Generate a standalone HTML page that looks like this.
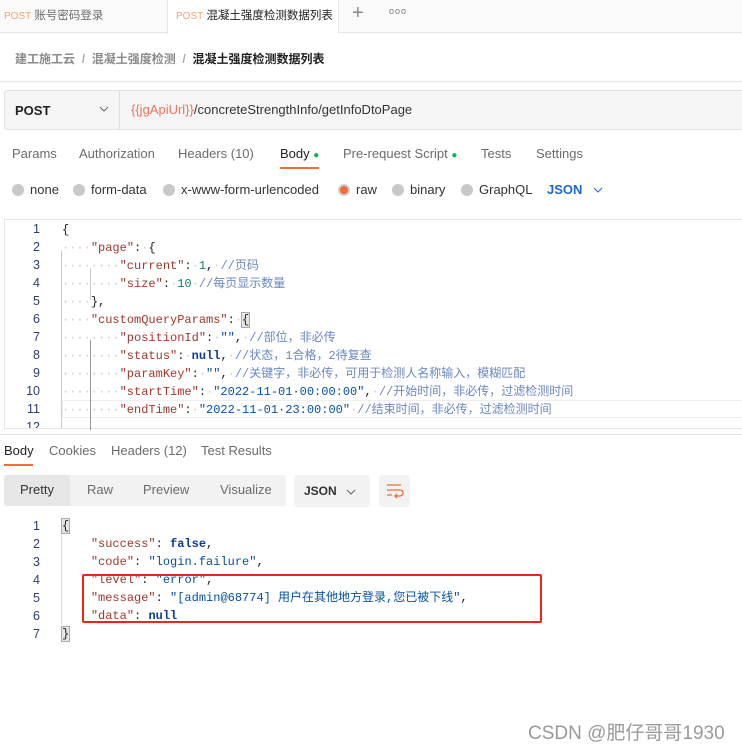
<!DOCTYPE html>
<html><head><meta charset="utf-8"><style>
*{margin:0;padding:0;box-sizing:border-box}
body{width:742px;height:749px;background:#fff;font-family:"Liberation Sans","Noto Sans CJK SC",sans-serif;color:#212121;position:relative;overflow:hidden;font-size:13px}
.a{position:absolute;white-space:nowrap}
.g{color:#6b6b6b}
.mono{font-family:"Liberation Mono","Noto Sans CJK SC",monospace;font-size:12px}
.k{color:#a3362b}.s{color:#0451a5}.n{color:#098658}.b{color:#0d3a9e;font-weight:bold}.c{color:#6a88c0}.d{color:#ccc}
.ln{position:absolute;width:40px;text-align:right;font-size:12.5px;color:#2c3e6e;font-family:"Liberation Sans",sans-serif}
.radio{display:inline-block;width:12px;height:12px;border-radius:50%;background:#c8c8c8;vertical-align:-2px;margin-right:6px}
</style></head><body>
<div class="a" style="left:0;top:0;width:742px;height:33px;background:#fafafa;border-bottom:1px solid #e6e6e6"></div>
<div class="a" style="left:167px;top:0;width:172px;height:34px;background:#fff;border-left:1px solid #e6e6e6;border-right:1px solid #e6e6e6"></div>
<div class="a" style="left:4px;top:7px;font-size:11.5px"><span style="color:#f5a26e;font-size:10px">POST</span> <span class="g">账号密码登录</span></div>
<div class="a" style="left:176px;top:7px;font-size:11.5px"><span style="color:#f5a26e;font-size:10px">POST</span> <span>混凝土强度检测数据列表</span></div>
<div class="a" style="left:352px;top:2px;font-size:20px;color:#888">+</div>
<div class="a" style="left:389px;top:6px;font-size:9px;color:#777;letter-spacing:1px">ooo</div>
<div class="a" style="left:15px;top:50px;font-size:12px;font-weight:bold"><span style="color:#8a8a8a">建工施工云</span> <span style="color:#aaa">&nbsp;/&nbsp;</span> <span style="color:#8a8a8a">混凝土强度检测</span> <span style="color:#aaa">&nbsp;/&nbsp;</span> <span>混凝土强度检测数据列表</span></div>
<div class="a" style="left:0;top:81px;width:742px;height:1px;background:#e6e6e6"></div>
<div class="a" style="left:4px;top:90px;width:760px;height:40px;background:#f5f5f5;border:1px solid #e3e3e3;border-radius:3px"></div>
<div class="a" style="left:119px;top:91px;width:1px;height:38px;background:#e0e0e0"></div>
<div class="a" style="left:15px;top:103px;font-weight:bold;font-size:13px">POST</div>
<svg class="a" style="left:99px;top:106px" width="10" height="6"><path d="M1 1l4 4 4-4" fill="none" stroke="#666"/></svg>
<div class="a" style="left:131px;top:102px;font-size:13px"><span style="color:#f0735a">{{jgApiUrl}}</span><span style="color:#333">/concreteStrengthInfo/getInfoDtoPage</span></div>
<div class="a g" style="left:12px;top:146px">Params</div>
<div class="a g" style="left:79px;top:146px">Authorization</div>
<div class="a g" style="left:178px;top:146px">Headers <span>(10)</span></div>
<div class="a" style="left:280px;top:146px">Body <span style="color:#0cb552;font-size:10px">●</span></div>
<div class="a" style="left:280px;top:167px;width:39px;height:2px;background:#f26b3a"></div>
<div class="a g" style="left:343px;top:146px">Pre-request Script <span style="color:#0cb552;font-size:10px">●</span></div>
<div class="a g" style="left:481px;top:146px">Tests</div>
<div class="a g" style="left:536px;top:146px">Settings</div>
<div class="a" style="left:12px;top:182px;color:#333"><span class="radio"></span>none</div>
<div class="a" style="left:73px;top:182px;color:#333"><span class="radio"></span>form-data</div>
<div class="a" style="left:163px;top:182px;color:#333"><span class="radio"></span>x-www-form-urlencoded</div>
<div class="a" style="left:338px;top:182px;color:#333"><span class="radio" style="background:#f26b3a;border:2px solid #ccc"></span>raw</div>
<div class="a" style="left:392px;top:182px;color:#333"><span class="radio"></span>binary</div>
<div class="a" style="left:461px;top:182px;color:#333"><span class="radio"></span>GraphQL</div>
<div class="a" style="left:547px;top:182px;color:#1f66d1;font-weight:bold">JSON</div>
<svg class="a" style="left:593px;top:187px" width="10" height="6"><path d="M1 1l4 4 4-4" fill="none" stroke="#1f66d1"/></svg>
<div class="a" style="left:4px;top:219px;width:760px;height:210px;border:1px solid #e6e6e6;border-right:none"></div>
<div class="a" style="left:62px;top:400px;width:680px;height:18px;border:1px solid #eee;border-right:none"></div>
<div class="a" style="left:61px;top:250px;width:1px;height:178px;background:#ccc"></div>
<div class="a" style="left:90px;top:268px;width:1px;height:32px;background:#ccc"></div>
<div class="a" style="left:90px;top:340px;width:1px;height:90px;background:#999"></div>
<div class="ln" style="left:0;top:222px">1</div><div class="ln" style="left:0;top:240px">2</div><div class="ln" style="left:0;top:258px">3</div><div class="ln" style="left:0;top:276px">4</div><div class="ln" style="left:0;top:294px">5</div><div class="ln" style="left:0;top:312px">6</div><div class="ln" style="left:0;top:330px">7</div><div class="ln" style="left:0;top:348px">8</div><div class="ln" style="left:0;top:366px">9</div><div class="ln" style="left:0;top:384px">10</div><div class="ln" style="left:0;top:402px">11</div><div class="ln" style="left:0;top:420px;height:8px;overflow:hidden">12</div>
<div class="a mono" style="left:62px;top:221px;line-height:18px">
<div>{</div>
<div><span class="d">····</span><span class="k">"page"</span>:<span class="d">·</span>{</div>
<div><span class="d">········</span><span class="k">"current"</span>:<span class="d">·</span><span class="n">1</span>,<span class="d">·</span><span class="c">//页码</span></div>
<div><span class="d">········</span><span class="k">"size"</span>:<span class="d">·</span><span class="n">10</span><span class="d">·</span><span class="c">//每页显示数量</span></div>
<div><span class="d">····</span>},</div>
<div><span class="d">····</span><span class="k">"customQueryParams"</span>:<span class="d">·</span><span style="background:#e4e4e4;outline:1px solid #aaa">{</span></div>
<div><span class="d">········</span><span class="k">"positionId"</span>:<span class="d">·</span><span class="s">""</span>,<span class="d">·</span><span class="c">//部位，非必传</span></div>
<div><span class="d">········</span><span class="k">"status"</span>:<span class="d">·</span><span class="b">null</span>,<span class="d">·</span><span class="c">//状态，1合格，2待复查</span></div>
<div><span class="d">········</span><span class="k">"paramKey"</span>:<span class="d">·</span><span class="s">""</span>,<span class="d">·</span><span class="c">//关键字，非必传，可用于检测人名称输入，模糊匹配</span></div>
<div><span class="d">········</span><span class="k">"startTime"</span>:<span class="d">·</span><span class="s">"2022-11-01·00:00:00"</span>,<span class="d">·</span><span class="c">//开始时间，非必传，过滤检测时间</span></div>
<div><span class="d">········</span><span class="k">"endTime"</span>:<span class="d">·</span><span class="s">"2022-11-01·23:00:00"</span><span class="d">·</span><span class="c">//结束时间，非必传，过滤检测时间</span></div>
</div>
<div class="a" style="left:0;top:434px;width:742px;height:1px;background:#e0e0e0"></div>
<div class="a" style="left:4px;top:443px">Body</div>
<div class="a" style="left:4px;top:464px;width:29px;height:2px;background:#f26b3a"></div>
<div class="a g" style="left:49px;top:443px">Cookies</div>
<div class="a g" style="left:111px;top:443px">Headers (12)</div>
<div class="a g" style="left:201px;top:443px">Test Results</div>
<div class="a" style="left:4px;top:475px;width:282px;height:31px;background:#f2f2f2;border-radius:3px"></div>
<div class="a" style="left:4px;top:475px;width:66px;height:31px;background:#e6e6e6;border-radius:3px 0 0 3px"></div>
<div class="a" style="left:20px;top:482px;color:#333">Pretty</div>
<div class="a g" style="left:87px;top:482px">Raw</div>
<div class="a g" style="left:143px;top:482px">Preview</div>
<div class="a g" style="left:220px;top:482px">Visualize</div>
<div class="a" style="left:294px;top:475px;width:76px;height:32px;background:#f2f2f2;border-radius:3px"></div>
<div class="a" style="left:304px;top:484px;font-size:12px;font-weight:bold;color:#333">JSON</div>
<svg class="a" style="left:346px;top:489px" width="10" height="6"><path d="M1 1l4 4 4-4" fill="none" stroke="#666"/></svg>
<div class="a" style="left:379px;top:475px;width:31px;height:32px;background:#f2f2f2;border-radius:3px"></div>
<svg class="a" style="left:386px;top:483px" width="18" height="16" viewBox="0 0 18 16"><path d="M1 2H15M1 7H14a3 3 0 0 1 0 6H9M11 11l-2 2 2 2M1 12H6" fill="none" stroke="#f26b3a" stroke-width="1.3"/></svg>
<div class="ln" style="left:0;top:519px">1</div><div class="ln" style="left:0;top:537px">2</div><div class="ln" style="left:0;top:555px">3</div><div class="ln" style="left:0;top:573px">4</div><div class="ln" style="left:0;top:591px">5</div><div class="ln" style="left:0;top:609px">6</div><div class="ln" style="left:0;top:627px">7</div>
<div class="a" style="left:61px;top:535px;width:1px;height:90px;background:#ddd"></div>
<div class="a mono" style="left:62px;top:517px;line-height:18px">
<div><span style="background:#e4e4e4;outline:1px solid #aaa">{</span></div>
<div>&nbsp;&nbsp;&nbsp;&nbsp;<span class="k">"success"</span>: <span class="b">false</span>,</div>
<div>&nbsp;&nbsp;&nbsp;&nbsp;<span class="k">"code"</span>: <span class="s">"login.failure"</span>,</div>
<div>&nbsp;&nbsp;&nbsp;&nbsp;<span class="k">"level"</span>: <span class="s">"error"</span>,</div>
<div>&nbsp;&nbsp;&nbsp;&nbsp;<span class="k">"message"</span>: <span class="s">"[admin@68774] 用户在其他地方登录,您已被下线"</span>,</div>
<div>&nbsp;&nbsp;&nbsp;&nbsp;<span class="k">"data"</span>: <span class="b">null</span></div>
<div><span style="background:#e4e4e4;outline:1px solid #aaa">}</span></div>
</div>
<div class="a" style="left:82px;top:574px;width:460px;height:49px;border:2px solid #f0231c;border-radius:2px"></div>
<div class="a" style="left:528px;top:718px;font-size:19px;color:#999">CSDN @肥仔哥哥1930</div>
</body></html>
